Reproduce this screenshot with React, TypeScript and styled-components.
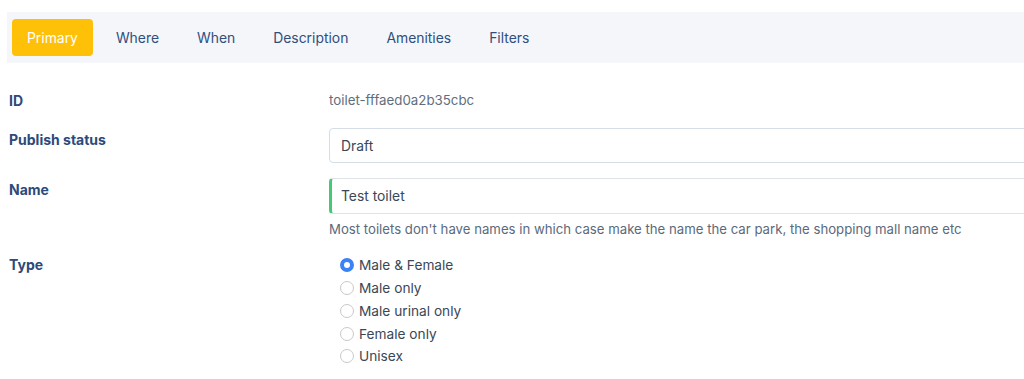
import styled, { createGlobalStyle } from 'styled-components'

const GlobalStyle = createGlobalStyle`
  html, body {
    margin: 0;
    padding: 0;
    background: #ffffff;
    overflow: hidden;
  }
  body {
    font-family: Inter, 'Liberation Sans', sans-serif;
  }
`

const tabs = ['Primary', 'Where', 'When', 'Description', 'Amenities', 'Filters']
const types = ['Male & Female', 'Male only', 'Male urinal only', 'Female only', 'Unisex']

const Page = styled.div`
  width: 1080px;
  padding: 12px 0 0 7px;
`

const TabBar = styled.nav`
  align-items: center;
  background: #f5f6fa;
  display: flex;
  gap: 8px;
  height: 51px;
  padding: 0 5px;
`

const Tab = styled.button<{ active?: boolean }>`
  background: ${({ active }): string => (active ? '#ffc107' : 'transparent')};
  border: none;
  border-radius: 4px;
  color: ${({ active }): string => (active ? '#ffffff' : '#2f4f7f')};
  cursor: pointer;
  font-family: Inter, 'Liberation Sans', sans-serif;
  font-size: 13.9px;
  height: 37px;
  padding: 0 15px;
`

const Form = styled.div`
  display: flex;
  flex-direction: column;
  padding: 25px 0 0 2px;
`

const Row = styled.div<{ gapBelow: number }>`
  display: grid;
  grid-template-columns: 320px 740px;
  margin-bottom: ${({ gapBelow }): string => `${gapBelow}px`};
`

const Label = styled.div<{ offset: number }>`
  color: #2c4a7a;
  font-size: 14px;
  font-weight: 650;
  line-height: 17px;
  padding-top: ${({ offset }): string => `${offset}px`};
`

const Value = styled.div`
  color: #5f6e7e;
  font-size: 13.3px;
  line-height: 24px;
`

const Box = styled.div<{ valid?: boolean }>`
  align-items: center;
  background: #ffffff;
  border: 1px solid ${({ valid }): string => (valid ? '#dfe3e8' : '#d5dee7')};
  border-left: ${({ valid }): string => (valid ? '3px solid #48c774' : '1px solid #d5dee7')};
  border-radius: 4px;
  box-sizing: border-box;
  color: #3b4756;
  display: flex;
  font-size: 13.85px;
  height: ${({ valid }): string => (valid ? '36px' : '35px')};
  padding-left: ${({ valid }): string => (valid ? '9px' : '11px')};
`

const Help = styled.div`
  color: #5b6a7b;
  font-size: 13.2px;
  line-height: 16px;
  margin-top: 7px;
`

const RadioList = styled.div`
  display: flex;
  flex-direction: column;
  padding: 0 0 0 11px;
`

const RadioRow = styled.label`
  align-items: center;
  color: #3b4756;
  display: flex;
  font-size: 13.7px;
  gap: 5px;
  height: 22.75px;
`

const RadioDot = styled.span<{ checked?: boolean }>`
  background: ${({ checked }): string => (checked ? '#3b82f6' : '#ffffff')};
  border: ${({ checked }): string => (checked ? '4px solid #3b82f6' : '1px solid #c9c9c9')};
  border-radius: 50%;
  box-sizing: border-box;
  display: inline-block;
  height: 14px;
  position: relative;
  width: 14px;

  &::after {
    background: #ffffff;
    border-radius: 50%;
    content: '';
    display: ${({ checked }): string => (checked ? 'block' : 'none')};
    height: 6px;
    width: 6px;
  }
`

const App: React.FC = () => (
  <Page>
    <GlobalStyle />
    <TabBar>
      {tabs.map((t, i) => (
        <Tab key={t} active={i === 0}>
          {t}
        </Tab>
      ))}
    </TabBar>
    <Form>
      <Row gapBelow={16}>
        <Label offset={4}>ID</Label>
        <Value>toilet-fffaed0a2b35cbc</Value>
      </Row>
      <Row gapBelow={15}>
        <Label offset={3}>Publish status</Label>
        <Box>Draft</Box>
      </Row>
      <Row gapBelow={17}>
        <Label offset={3}>Name</Label>
        <div>
          <Box valid>Test toilet</Box>
          <Help>Most toilets don't have names in which case make the name the car park, the shopping mall name etc</Help>
        </div>
      </Row>
      <Row gapBelow={0}>
        <Label offset={2}>Type</Label>
        <RadioList>
          {types.map((t, i) => (
            <RadioRow key={t}>
              <RadioDot checked={i === 0} />
              {t}
            </RadioRow>
          ))}
        </RadioList>
      </Row>
    </Form>
  </Page>
)

export default App
